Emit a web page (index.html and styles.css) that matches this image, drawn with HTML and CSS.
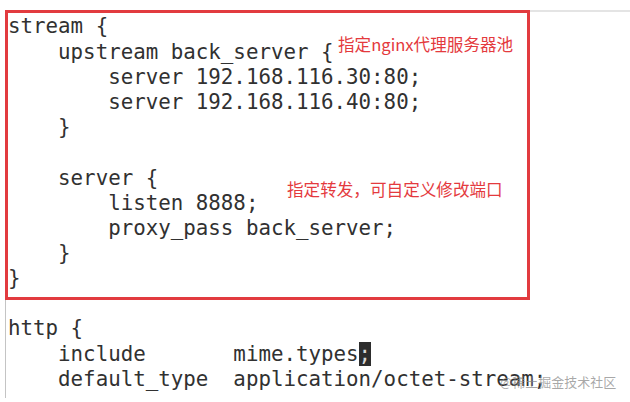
FILE: index.html
```html
<!DOCTYPE html>
<html lang="zh-CN">
<head>
<meta charset="utf-8">
<title>nginx stream</title>
<link rel="stylesheet" href="styles.css">
</head>
<body>
<div class="frame">
  <div class="box">
    <div class="ln">stream {</div>
    <div class="ln">    upstream back_server {</div>
    <div class="ln">        server 192.168.116.30:80;</div>
    <div class="ln">        server 192.168.116.40:80;</div>
    <div class="ln">    }</div>
    <div class="ln"> </div>
    <div class="ln">    server {</div>
    <div class="ln">        listen 8888;</div>
    <div class="ln">        proxy_pass back_server;</div>
    <div class="ln">    }</div>
    <div class="ln">}</div>
  </div>
  <div class="code">
    <div class="ln">http {</div>
    <div class="ln">    include       mime.types<span class="cursor">;</span></div>
    <div class="ln">    default_type  application/octet-stream;</div>
  </div>
  <div class="note note-pool">指定nginx代理服务器池</div>
  <div class="note note-fwd">指定转发，可自定义修改端口</div>
  <div class="watermark">@稀土掘金技术社区</div>
</div>
</body>
</html>
```

FILE: styles.css
```css
html, body {
  margin: 0;
  padding: 0;
  background: #ffffff;
}

body {
  width: 630px;
  height: 402px;
  overflow: hidden;
  font-family: "DejaVu Sans Mono", "Liberation Mono", monospace;
  font-size: 20.8px;
  color: #313131;
}

.frame {
  position: relative;
  margin: 10px 0 0 5px;
  height: 386px;
  border-left: 1px solid #c4c4c4;
  border-top: 2px solid #e4e4e4;
}

.box {
  box-sizing: border-box;
  width: 525px;
  height: 290px;
  margin: -2px 0 0 -1px;
  padding: 1.4px 0 0 0;
  border: 3px solid #e23b3f;
}

.code {
  margin-top: 16.4px;
  padding-left: 2px;
}

.ln {
  white-space: pre;
  height: 25.2px;
  line-height: 25.2px;
}

.cursor {
  background: #2d2d2d;
  color: #d8d8d8;
}

.note {
  position: absolute;
  font-family: "Noto Sans CJK SC", "Noto Sans", sans-serif;
  font-size: 16.6px;
  line-height: 1;
  color: #e43a3e;
  white-space: nowrap;
}

.note-pool {
  left: 332px;
  top: 24px;
}

.note-fwd {
  left: 281px;
  top: 169px;
}

.watermark {
  position: absolute;
  left: 494px;
  top: 363px;
  font-family: "Noto Sans CJK SC", "Noto Sans", sans-serif;
  font-size: 13px;
  line-height: 1;
  color: rgba(140, 140, 140, 0.75);
  white-space: nowrap;
}
```
